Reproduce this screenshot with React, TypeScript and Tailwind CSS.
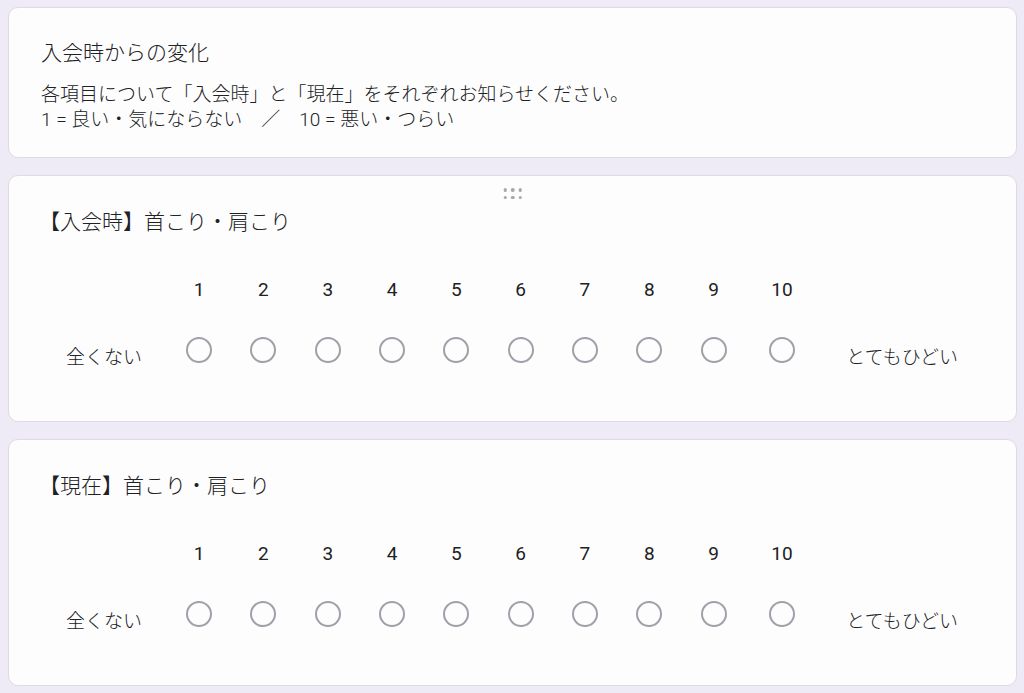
import React from 'react'

const nums = [1, 2, 3, 4, 5, 6, 7, 8, 9, 10]

function DragHandle() {
  return (
    <div className="absolute top-[12px] left-1/2 -translate-x-1/2 grid grid-cols-3 gap-x-[4px] gap-y-[4px]">
      {[0, 1, 2, 3, 4, 5].map((i) => (
        <span key={i} className="block w-[3.5px] h-[3.5px] rounded-full bg-[#a5a8ad]" />
      ))}
    </div>
  )
}

function ScaleCard({ title, handle }: { title: string; handle?: boolean }) {
  return (
    <div className="relative bg-[#fdfdfd] border border-[#dcdce0] rounded-[10px] pl-8 pr-8 pt-8 pb-[51px] mr-[-1px]">
      {handle && <DragHandle />}
      <h2 className="text-[21px] leading-[28px] text-[#202124] -ml-[2px]">{title}</h2>

      {/* Linear scale */}
      <div className="flex items-start mt-[42px]">
        <div className="w-[126px] pt-[67px] text-center text-[19px] leading-[25px] text-[#202124]">
          全くない
        </div>
        {nums.map((n) => (
          <div
            key={n}
            className={`flex flex-col items-center ${n === 10 ? 'w-[72.6px]' : 'w-[64.3px]'}`}
          >
            <span className="h-[24px] leading-[24px] text-[19px] font-normal text-[#202124]">{n}</span>
            <span className="mt-[35px] block w-[26px] h-[26px] rounded-full border-[2.5px] border-[#9ea2a8]" />
          </div>
        ))}
        <div className="flex-1 pt-[67px] pl-[2px] text-center text-[19px] leading-[25px] text-[#202124]">
          とてもひどい
        </div>
      </div>
    </div>
  )
}

export default function App() {
  return (
    <div
      className="min-h-screen bg-[#efebf6] px-[8px] pt-[7px] pb-4 flex flex-col gap-[17px] font-light"
      style={{ fontFamily: 'Roboto, "Noto Sans CJK JP", sans-serif' }}
    >
      {/* Header card */}
      <div className="bg-[#fdfdfd] border border-[#dcdce0] rounded-[10px] pl-8 pr-8 pt-[31px] pb-[25px] mr-[-1px]">
        <h1 className="text-[21px] leading-[28px] text-[#202124]">入会時からの変化</h1>
        <div className="mt-[15px] text-[19px] leading-[25px] text-[#202124]">
          <p>各項目について「入会時」と「現在」をそれぞれお知らせください。</p>
          <p>1 = 良い・気にならない　／　10 = 悪い・つらい</p>
        </div>
      </div>

      <ScaleCard title="【入会時】首こり・肩こり" handle />
      <ScaleCard title="【現在】首こり・肩こり" />
    </div>
  )
}
